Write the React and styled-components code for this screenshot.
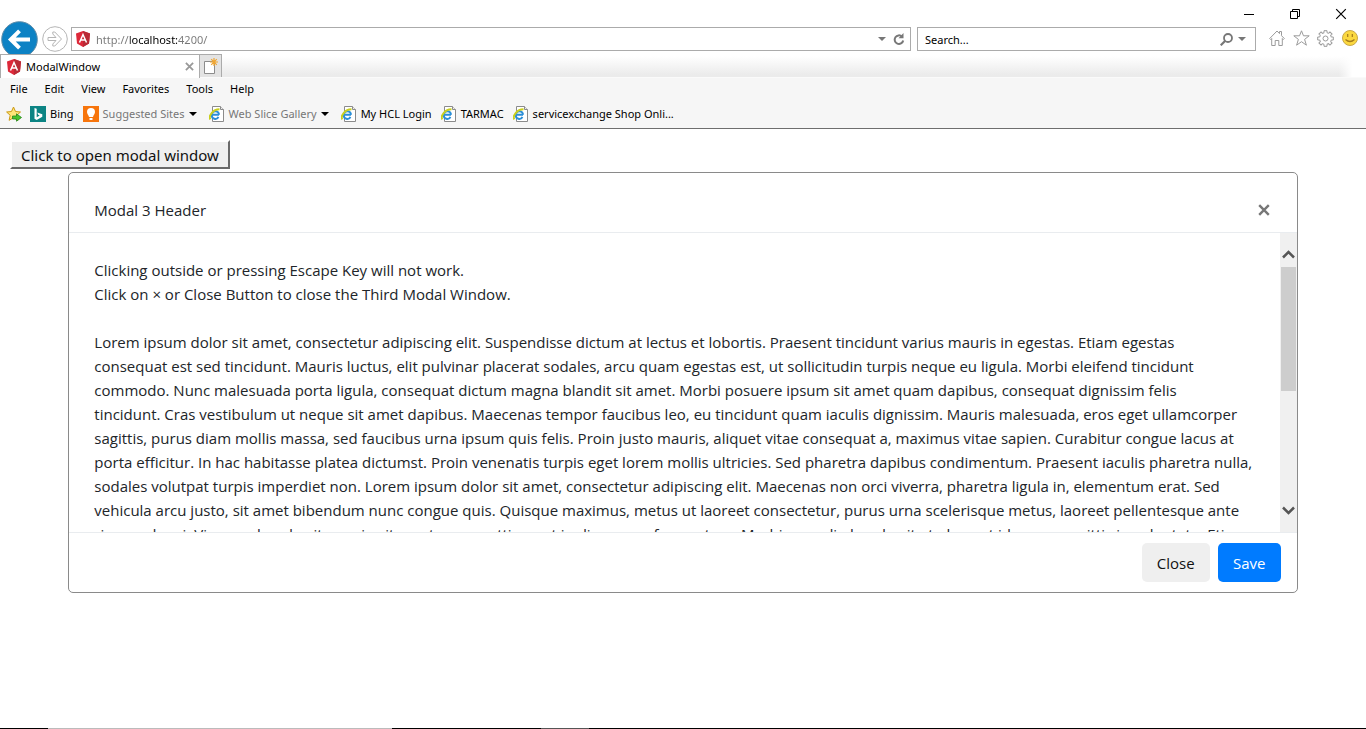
import React from "react";
import styled, { createGlobalStyle } from "styled-components";

const GlobalStyle = createGlobalStyle`
  * { box-sizing: border-box; }
  body { margin: 0; background: #fff; font-family: "Noto Sans", "Open Sans", sans-serif; }
  button, input { font-family: inherit; }
  svg { display: block; flex: none; }
`;

const Page = styled.div`
  min-height: 100vh;
  display: flex;
  flex-direction: column;
`;

const IconButton = styled.button`
  display: flex;
  align-items: center;
  justify-content: center;
  flex: none;
  width: ${(p) => p.$w || 24}px;
  height: ${(p) => p.$h || 24}px;
  padding: 0;
  border: 0;
  background: transparent;
`;

const TitleBar = styled.header`
  display: flex;
  justify-content: flex-end;
  height: 27px;
  padding: 2px 2px 0 0;
`;

const NavBar = styled.div`
  display: flex;
  align-items: flex-start;
  height: 27px;
  padding: 0 4px 0 1px;
`;

const NavButtons = styled.div`
  display: flex;
  align-items: center;
  gap: 4px;
  height: 38px;
  margin: -7px 3px 0 0;
  flex: none;
`;

const Field = styled.label`
  display: flex;
  align-items: center;
  height: 24px;
  border: 1px solid #ababab;
  background: #fff;
  min-width: 0;
  flex: ${(p) => (p.$grow ? "1 1 auto" : "0 0 339px")};
  padding: ${(p) => (p.$grow ? "0 2px 0 3px" : "0 5px 0 7px")};
  margin-right: ${(p) => (p.$grow ? 6 : 9)}px;
`;

const FieldInput = styled.input`
  flex: 1;
  min-width: 0;
  height: 22px;
  border: 0;
  padding: 0;
  outline: none;
  font-size: 11px;
  line-height: 16px;
  color: #000;
  background: transparent;
  &::placeholder { color: #000; opacity: 1; }
`;

/* The host name is darker than the rest of the address. */
const AddressInput = styled(FieldInput)`
  margin-left: 5px;
  background: linear-gradient(90deg, #777 34px, #000 34px, #000 82px, #777 82px);
  background-clip: text;
  -webkit-text-fill-color: transparent;
`;

const TabStrip = styled.div`
  display: flex;
  height: 24px;
  background: linear-gradient(90deg, transparent 98%, #fff 99%), linear-gradient(#fff 10%, #ebebeb 90%);
  border-bottom: 1px solid #fafafa;
`;

const Tab = styled.div`
  display: flex;
  align-items: center;
  width: 200px;
  height: 24px;
  padding: 0 2px 0 5px;
  gap: 4px;
  border: 1px solid #ababab;
  border-bottom: 0;
  background: #fff;
  font-size: 11px;
  line-height: 16px;
  span { flex: 1; }
`;

const NewTab = styled.button`
  display: flex;
  align-items: center;
  justify-content: center;
  width: 22px;
  height: 23px;
  padding: 0;
  border: 1px solid #ababab;
  border-left: 0;
  border-bottom: 0;
  background: #e3e3e3;
`;

const MenuBar = styled.nav`
  display: flex;
  align-items: center;
  gap: 17px;
  height: 22px;
  padding: 0 10px;
  background: #f6f6f6;
`;

const MenuItem = styled.button`
  border: 0;
  padding: 0;
  background: transparent;
  color: #000;
  font-size: 11px;
  line-height: 16px;
`;

const FavoritesBar = styled.nav`
  display: flex;
  align-items: center;
  height: 29px;
  padding: 0 6px 1px;
  gap: 8px;
  background: #f6f6f6;
  border-bottom: 1px solid #6e6e6e;
`;

const Favorite = styled.a`
  display: flex;
  align-items: center;
  gap: 4px;
  flex: none;
  margin-right: ${(p) => (p.$muted ? 4 : 1)}px;
  color: ${(p) => (p.$muted ? "#777" : "#000")};
  font-size: 11px;
  line-height: 16px;
  text-decoration: none;
  white-space: nowrap;
`;

const Content = styled.main`
  flex: 1;
  padding: 11px 0 16px;
`;

const OpenButton = styled.button`
  display: block;
  margin: 0 0 3px 10px;
  height: 29px;
  padding: 0 9px;
  border: 2px solid;
  border-color: #fff #696969 #696969 #fff;
  background: #efefef;
  color: #111;
  font-size: 15px;
  line-height: 24px;
  white-space: nowrap;
`;

const Modal = styled.section`
  width: 90%;
  margin: 0 auto;
  border: 1px solid #8a8a8a;
  border-radius: 5px;
  background: #fff;
  color: #212529;
  font-family: "Open Sans", "Noto Sans", sans-serif;
  font-size: 15px;
  line-height: 24px;
`;

const ModalHeader = styled.header`
  display: flex;
  align-items: center;
  justify-content: space-between;
  height: 60px;
  padding: 15px 21px 0 25px;
  border-bottom: 1px solid #e9ecef;
`;

const ModalTitle = styled.h1`
  margin: 0;
  font-size: 15px;
  line-height: 24px;
  font-weight: 400;
`;

const ModalBody = styled.div`
  display: flex;
  height: 299px;
  overflow: hidden;
`;

const ModalText = styled.div`
  flex: 1;
  min-width: 0;
  padding: 25px 0 0 25px;
  overflow: hidden;
  white-space: nowrap;
  p { margin: 0 0 24px; }
`;

const ScrollTrack = styled.div`
  display: flex;
  flex-direction: column;
  justify-content: space-between;
  width: 17px;
  padding: 13px 0;
  background: #f0f0f0;
`;

const ScrollThumb = styled.div`
  height: 124px;
  margin: 4px 1px auto;
  background: #cdcdcd;
`;

const ModalFooter = styled.footer`
  display: flex;
  justify-content: flex-end;
  gap: 8px;
  padding: 10px 16px;
  border-top: 1px solid #e9ecef;
`;

const ActionButton = styled.button`
  width: ${(p) => (p.$primary ? 63 : 68)}px;
  height: 39px;
  padding: 0;
  border: 0;
  border-radius: 5px;
  background: ${(p) => (p.$primary ? "#007bff" : "#efefef")};
  color: ${(p) => (p.$primary ? "#fff" : "#111")};
  font-size: 15px;
  line-height: 24px;
`;

const BottomEdge = styled.div`
  height: 1px;
  background: linear-gradient(90deg, #000 48px, #bbb 48px, #bbb 392px, #000 392px, #000 541px, #555 541px, #555 589px, #000 589px);
`;

const Angular = () => (
  <svg width="16" height="18" viewBox="0 0 16 18">
    <path d="M8 1 15 3.5 14 13.5 8 17 2 13.5 1 3.5Z" fill="#dd2839" />
    <path d="M8 1 15 3.5 14 13.5 8 17Z" fill="#b92a35" />
    <path d="M4.5 12.5 8 4.5l3.5 8M5.8 10h4.4" fill="none" stroke="#fff" strokeWidth="1.5" />
  </svg>
);

const Caret = ({ color = "#000" }) => (
  <svg width="8" height="4" viewBox="0 0 8 4"><path d="M0 0h8L4 4Z" fill={color} /></svg>
);

const IePage = () => (
  <svg width="16" height="16" viewBox="0 0 16 16">
    <path d="M3.5.5h8l3 3v12h-11Z" fill="#fff" stroke="#8b8b8b" />
    <path d="M11.5.5v3h3" fill="#eee" stroke="#8b8b8b" />
    <path d="M10 8.8H2.900A3.500 3.500 0 1 1 10 8.800M2.900 9a3.400 3.400 0 0 0 6.500 1.800" fill="none" stroke="#2c8fd8" strokeWidth="2" />
    <path d="M1.3 13.4C-.8 10 4 3.200 10.500 3.300" fill="none" stroke="#c9cf1e" strokeWidth="2" />
  </svg>
);

const StarAdd = () => (
  <svg width="16" height="16" viewBox="0 0 16 16">
    <path d="m7.5 1 2 4.5 5 .5-3.8 3.3 1.1 5-4.3-2.6-4.4 2.6 1.1-5L.6 6l4.9-.5Z" fill="#ffe579" stroke="#cc9a15" />
    <path d="M6.5 10h4V7.8l5 3.7-5 3.7V13h-4Z" fill="#48c32e" stroke="#26851a" strokeWidth=".8" />
  </svg>
);

const Bing = () => (
  <svg width="16" height="16" viewBox="0 0 16 16">
    <path fill="#0c8484" d="M0 0h16v16H0z" />
    <path d="m4.5 2 2.2.8v8.4l3-1.8-1.5-.7-.9-2.3 5 1.8v2.5L6.7 14l-2.2-1.3Z" fill="#fff" />
  </svg>
);

const Bulb = () => (
  <svg width="16" height="16" viewBox="0 0 16 16">
    <path fill="#f7750c" d="M0 0h16v16H0z" />
    <path d="M8 2a4 4 0 0 1 4 4c0 2-1.5 2.7-2 5H6C5.5 8.7 4 8 4 6a4 4 0 0 1 4-4ZM6.5 12h3v2h-3Z" fill="#fff" />
  </svg>
);

const Back = () => (
  <svg width="37" height="37" viewBox="0 0 37 37">
    <circle cx="18.5" cy="18.5" r="17.8" fill="#0d82c4" stroke="#5e8ca8" />
    <path d="M29 18.5H10M18.5 9.8 9.8 18.5l8.7 8.7" fill="none" stroke="#fff" strokeWidth="4" />
  </svg>
);

const Forward = () => (
  <svg width="26" height="26" viewBox="0 0 26 26" fill="none" stroke="#b5b5b5">
    <circle cx="13" cy="13" r="12.3" />
    <path d="M6 11.5h8L10.8 8v-2h2L19.5 13l-6.7 7h-2v-2L14 14.5H6Z" />
  </svg>
);

const Refresh = () => (
  <svg width="12" height="13" viewBox="0 0 12 13">
    <path d="M9 3.6A4.3 4.3 0 1 0 10.2 7.5" fill="none" stroke="#777" strokeWidth="2" />
    <path d="M10.5 0v5.2H5.5Z" fill="#777" />
  </svg>
);

const Magnifier = () => (
  <svg width="13" height="13" viewBox="0 0 13 13" fill="none" stroke="#777">
    <circle cx="8" cy="5" r="4" strokeWidth="1.8" />
    <path d="M5 8 .7 12.3" strokeWidth="2.2" />
  </svg>
);

const Home = () => (
  <svg width="16" height="16" viewBox="0 0 16 16" fill="none" stroke="#9b9b9b">
    <path d="M.7 8.5 8 1l2.5 2.6V1.5h2v4.2l2.8 2.8-1 1-1-1v7H9.8v-5H6.2v5H2.7v-7l-1 1Z" />
  </svg>
);

const Star = () => (
  <svg width="17" height="16" viewBox="0 0 17 16" fill="none" stroke="#9b9b9b">
    <path d="m8.5.8 2 5h5.7l-4.6 3.6 1.8 5.8-4.9-3.5-4.9 3.5 1.8-5.8L.8 5.8h5.7Z" />
  </svg>
);

const Gear = () => (
  <svg width="17" height="17" viewBox="-8.5 -8.5 17 17" fill="none" stroke="#9b9b9b">
    {[0, 45, 90, 135, 180, 225, 270, 315].map((a) => (
      <path key={a} d="M-1.5-5.8V-7.8h3v2L3.1-5.1" transform={`rotate(${a})`} />
    ))}
    <circle r="2.5" />
  </svg>
);

const Smile = () => (
  <svg width="16" height="16" viewBox="0 0 16 16">
    <circle cx="8" cy="8" r="7.5" fill="#fbd83f" stroke="#c8a84a" />
    <path d="M5.7 4v3M10.3 4v3M3.5 9.5q4.5 4 9 0" fill="none" stroke="#a37a1c" strokeWidth="1.2" />
  </svg>
);

const NewTabIcon = () => (
  <svg width="16" height="17" viewBox="0 0 16 17">
    <path d="M1.5 3.5h10v12h-10Z" fill="#fff" stroke="#8c8c8c" />
    <path d="M11 0v8M7 4h8M8.2 1.2l5.6 5.6M13.8 1.2 8.2 6.8" stroke="#f0a632" strokeWidth="1.2" />
  </svg>
);

const Cross = ({ size, color, weight }) => (
  <svg width={size} height={size} viewBox="0 0 10 10">
    <path d="m1 1 8 8M9 1 1 9" stroke={color} strokeWidth={weight} />
  </svg>
);

const Chevron = ({ down }) => (
  <svg width="13" height="9" viewBox="0 0 13 9">
    <path d={down ? "m1 1.5 5.5 5.5L12 1.5" : "M1 7.5 6.5 2 12 7.5"} fill="none" stroke="#555" strokeWidth="2.5" />
  </svg>
);

const menus = ["File", "Edit", "View", "Favorites", "Tools", "Help"];

const favorites = [
  { label: "Bing", icon: <Bing /> },
  { label: "Suggested Sites", icon: <Bulb />, muted: true },
  { label: "Web Slice Gallery", icon: <IePage />, muted: true },
  { label: "My HCL Login", icon: <IePage /> },
  { label: "TARMAC", icon: <IePage /> },
  { label: "servicexchange Shop Onli...", icon: <IePage /> },
];

const lines = [
  "Lorem ipsum dolor sit amet, consectetur adipiscing elit. Suspendisse dictum at lectus et lobortis. Praesent tincidunt varius mauris in egestas. Etiam egestas",
  "consequat est sed tincidunt. Mauris luctus, elit pulvinar placerat sodales, arcu quam egestas est, ut sollicitudin turpis neque eu ligula. Morbi eleifend tincidunt",
  "commodo. Nunc malesuada porta ligula, consequat dictum magna blandit sit amet. Morbi posuere ipsum sit amet quam dapibus, consequat dignissim felis",
  "tincidunt. Cras vestibulum ut neque sit amet dapibus. Maecenas tempor faucibus leo, eu tincidunt quam iaculis dignissim. Mauris malesuada, eros eget ullamcorper",
  "sagittis, purus diam mollis massa, sed faucibus urna ipsum quis felis. Proin justo mauris, aliquet vitae consequat a, maximus vitae sapien. Curabitur congue lacus at",
  "porta efficitur. In hac habitasse platea dictumst. Proin venenatis turpis eget lorem mollis ultricies. Sed pharetra dapibus condimentum. Praesent iaculis pharetra nulla,",
  "sodales volutpat turpis imperdiet non. Lorem ipsum dolor sit amet, consectetur adipiscing elit. Maecenas non orci viverra, pharetra ligula in, elementum erat. Sed",
  "vehicula arcu justo, sit amet bibendum nunc congue quis. Quisque maximus, metus ut laoreet consectetur, purus urna scelerisque metus, laoreet pellentesque ante",
  "risus sed orci. Vivamus hendrerit eros in sit amet urna mattis, eget in diam urna fermentum. Morbi nec odio hendrerit et placerat id neque sagittis in vulputate. Etiam",
];

export default function App() {
  return (
    <Page>
      <GlobalStyle />
      <TitleBar>
        <IconButton $w={46} aria-label="Minimize">
          <svg width="10" height="10" viewBox="0 0 10 10"><path d="M0 5.5h10" stroke="#000" /></svg>
        </IconButton>
        <IconButton $w={46} aria-label="Restore">
          <svg width="10" height="10" viewBox="0 0 10 10" fill="none" stroke="#000"><path d="M.5 2.5h7v7h-7ZM2.5 2.5v-2h7v7h-2" /></svg>
        </IconButton>
        <IconButton $w={46} aria-label="Close window"><Cross size={12} color="#000" weight={1} /></IconButton>
      </TitleBar>
      <NavBar>
        <NavButtons>
          <IconButton $w={37} $h={37} aria-label="Back"><Back /></IconButton>
          <IconButton $w={26} $h={26} aria-label="Forward"><Forward /></IconButton>
        </NavButtons>
        <Field $grow>
          <Angular />
          <AddressInput aria-label="Address" defaultValue="http://localhost:4200/" />
          <IconButton $w={16} $h={22} aria-label="Show addresses"><Caret color="#777" /></IconButton>
          <IconButton $w={18} $h={22} aria-label="Refresh"><Refresh /></IconButton>
        </Field>
        <Field>
          <FieldInput aria-label="Search" placeholder="Search..." />
          <IconButton $w={16} $h={22} aria-label="Run search"><Magnifier /></IconButton>
          <IconButton $w={16} $h={22} aria-label="Search options"><Caret color="#777" /></IconButton>
        </Field>
        <IconButton $h={22} aria-label="Home"><Home /></IconButton>
        <IconButton $h={22} aria-label="Favorites"><Star /></IconButton>
        <IconButton $w={25} $h={22} aria-label="Settings"><Gear /></IconButton>
        <IconButton $h={22} aria-label="Feedback"><Smile /></IconButton>
      </NavBar>
      <TabStrip>
        <Tab>
          <Angular />
          <span>ModalWindow</span>
          <IconButton $w={16} $h={16} aria-label="Close tab"><Cross size={9} color="#999" weight={2} /></IconButton>
        </Tab>
        <NewTab aria-label="New tab"><NewTabIcon /></NewTab>
      </TabStrip>
      <MenuBar>
        {menus.map((m) => <MenuItem key={m}>{m}</MenuItem>)}
      </MenuBar>
      <FavoritesBar>
        <StarAdd />
        {favorites.map((f) => (
          <Favorite key={f.label} href="#" $muted={f.muted}>
            {f.icon}
            {f.label}
            {f.muted && <Caret />}
          </Favorite>
        ))}
      </FavoritesBar>
      <Content>
        <OpenButton>Click to open modal window</OpenButton>
        <Modal role="dialog" aria-labelledby="modal-title">
          <ModalHeader>
            <ModalTitle id="modal-title">Modal 3 Header</ModalTitle>
            <IconButton aria-label="Close modal"><Cross size={12} color="#777" weight={2} /></IconButton>
          </ModalHeader>
          <ModalBody>
            <ModalText>
              <p>
                Clicking outside or pressing Escape Key will not work.<br />
                Click on × or Close Button to close the Third Modal Window.
              </p>
              <p>
                {lines.map((l) => <React.Fragment key={l}>{l}<br /></React.Fragment>)}
              </p>
            </ModalText>
            <ScrollTrack>
              <IconButton $w={17} $h={17} aria-label="Scroll up"><Chevron /></IconButton>
              <ScrollThumb />
              <IconButton $w={17} $h={17} aria-label="Scroll down"><Chevron down /></IconButton>
            </ScrollTrack>
          </ModalBody>
          <ModalFooter>
            <ActionButton>Close</ActionButton>
            <ActionButton $primary>Save</ActionButton>
          </ModalFooter>
        </Modal>
      </Content>
      <BottomEdge />
    </Page>
  );
}
